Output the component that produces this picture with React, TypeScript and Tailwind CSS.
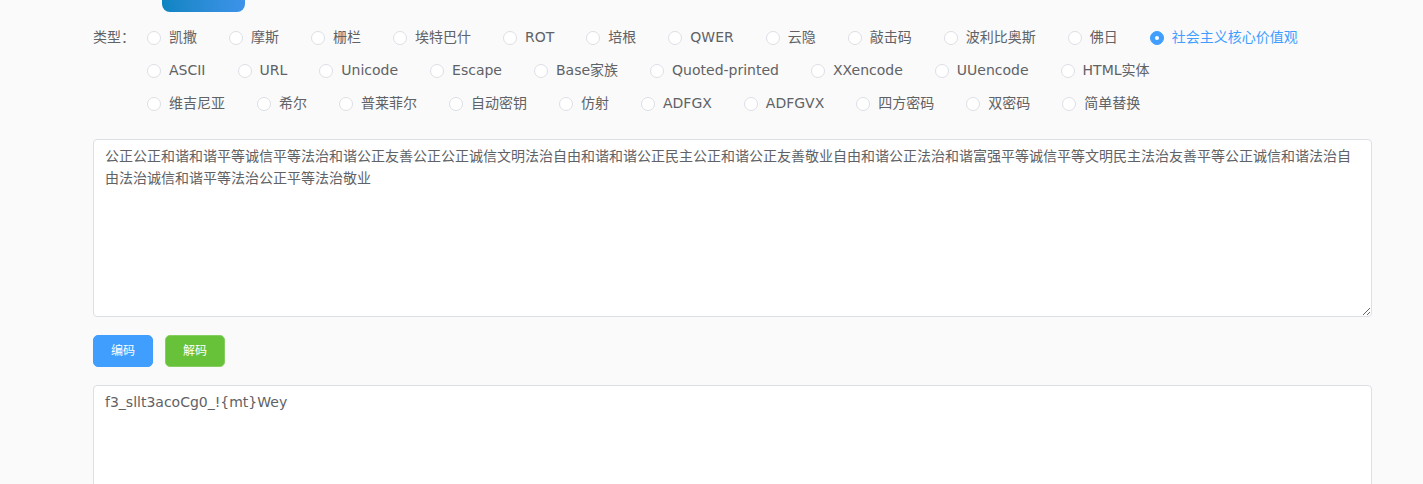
import React, { useState } from "react";

const ROWS: string[][] = [
  ["凯撒", "摩斯", "栅栏", "埃特巴什", "ROT", "培根", "QWER", "云隐", "敲击码", "波利比奥斯", "佛日", "社会主义核心价值观"],
  ["ASCII", "URL", "Unicode", "Escape", "Base家族", "Quoted-printed", "XXencode", "UUencode", "HTML实体"],
  ["维吉尼亚", "希尔", "普莱菲尔", "自动密钥", "仿射", "ADFGX", "ADFGVX", "四方密码", "双密码", "简单替换"],
];

const INPUT =
  "公正公正和谐和谐平等诚信平等法治和谐公正友善公正公正诚信文明法治自由和谐和谐公正民主公正和谐公正友善敬业自由和谐公正法治和谐富强平等诚信平等文明民主法治友善平等公正诚信和谐法治自由法治诚信和谐平等法治公正平等法治敬业";

function Radio({ label, checked, onSelect }: { label: string; checked: boolean; onSelect: () => void }) {
  return (
    <label className="flex items-center mr-[32px] cursor-pointer select-none" onClick={onSelect}>
      <span
        className={
          checked
            ? "w-[14px] h-[14px] rounded-full bg-[#409eff] border border-[#409eff] flex items-center justify-center"
            : "w-[14px] h-[14px] rounded-full bg-white border border-[#dcdfe6]"
        }
      >
        {checked && <span className="w-[4px] h-[4px] rounded-full bg-white" />}
      </span>
      <span className={checked ? "ml-[8px] text-[14px] text-[#409eff]" : "ml-[8px] text-[14px] text-[#606266]"}>
        {label}
      </span>
    </label>
  );
}

export default function App() {
  const [type, setType] = useState("社会主义核心价值观");

  return (
    <div
      className="min-h-[484px] bg-[#fafafa] pl-[93px] pr-[51px] overflow-hidden"
      style={{ fontFamily: '"DejaVu Sans", "Noto Sans CJK SC", sans-serif' }}
    >
      {/* tabs, scrolled mostly out of view */}
      <div className="flex items-end -mt-[20px] ml-[69px] h-[32px]">
        <div className="w-[83px] h-[32px] rounded-[8px] bg-gradient-to-r from-[#0b84c2] to-[#3d93ea] text-white text-[14px] leading-[26px] text-center">
          加密/解密
        </div>
        <div className="ml-[17px] h-[32px] text-[14px] leading-[26px] text-[#606266]">文本</div>
      </div>

      <div className="flex mt-[9px]">
        <div className="w-[54px] h-[33px] flex items-center text-[14px] text-[#606266]">类型：</div>
        <div className="flex flex-col">
          {ROWS.map((row, i) => (
            <div key={i} className="flex items-center h-[33px]">
              {row.map((r) => (
                <Radio key={r} label={r} checked={type === r} onSelect={() => setType(r)} />
              ))}
            </div>
          ))}
        </div>
      </div>

      <textarea
        className="block w-full h-[178px] mt-[19px] bg-white border border-[#dcdfe6] rounded-[4px] px-[11px] py-[5px] text-[14px] leading-[22px] text-[#606266] outline-none resize-y"
        defaultValue={INPUT}
      />

      <div className="flex mt-[18px] gap-[12px]">
        <button className="w-[60px] h-[32px] rounded-[5px] bg-[#409eff] border border-[#409eff] text-white text-[12px]">
          编码
        </button>
        <button className="w-[60px] h-[32px] rounded-[5px] bg-[#67c23a] border border-[#85ce61] text-white text-[12px]">
          解码
        </button>
      </div>

      <textarea
        className="block w-full h-[178px] mt-[18px] bg-white border border-[#dcdfe6] rounded-[4px] px-[11px] py-[5px] text-[14px] leading-[22px] text-[#606266] outline-none resize-y"
        defaultValue="f3_sllt3acoCg0_!{mt}Wey"
      />
    </div>
  );
}
